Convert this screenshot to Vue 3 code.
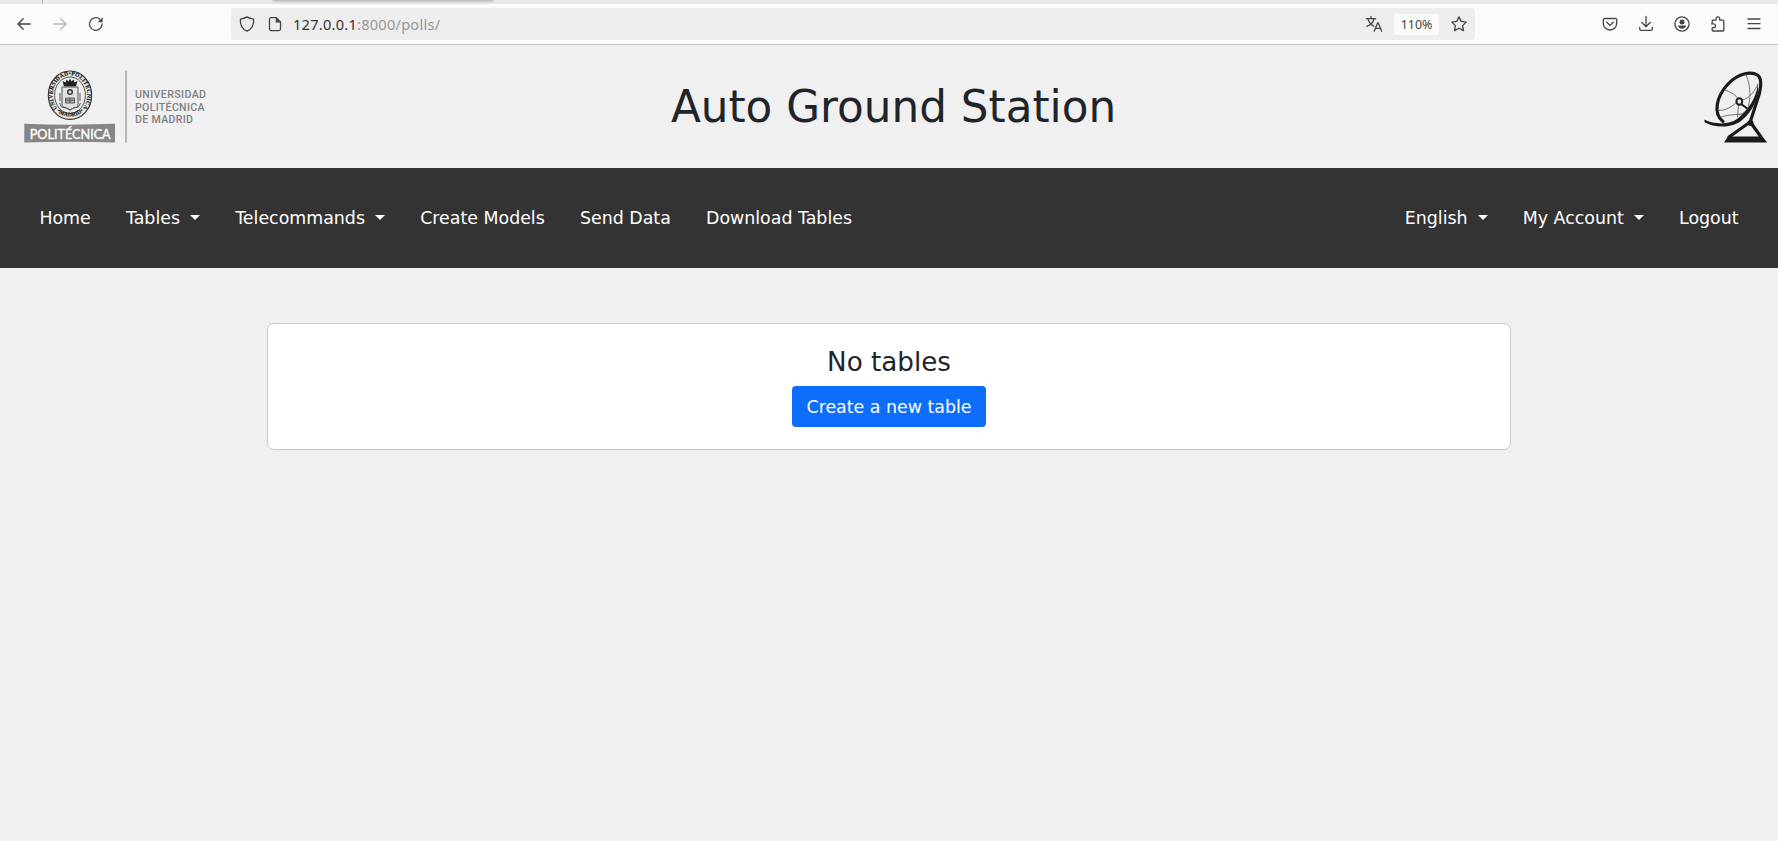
<script setup>
const leftLinks = [
  { label: 'Home' },
  { label: 'Tables', menu: true },
  { label: 'Telecommands', menu: true },
  { label: 'Create Models' },
  { label: 'Send Data' },
  { label: 'Download Tables' },
]
const rightLinks = [
  { label: 'English', menu: true },
  { label: 'My Account', menu: true },
  { label: 'Logout' },
]
</script>

<template>
  <div class="window">
    <div class="tabstrip"><i class="tab-sep"></i><i class="tab-shadow"></i></div>
    <div class="toolbar">
      <div class="nav-buttons">
        <svg class="ic" viewBox="0 0 16 16"><path d="M14.3 8H2M7.2 2.8L2 8l5.2 5.2" /></svg>
        <svg class="ic dim" viewBox="0 0 16 16"><path d="M1.7 8H14M8.8 2.8L14 8l-5.2 5.2" /></svg>
        <svg class="ic" viewBox="0 0 16 16"><path d="M14.1 7.8A6.3 6.3 0 1 1 11.9 3.2" /><path class="solid" d="M14.6 1.2v5H9.6z" /></svg>
      </div>
      <div class="urlbar">
        <svg class="ic shield" viewBox="0 0 16 16"><path d="M8 .9C6.100 2.200 3.800 2.800 1.400 3.100c-.5 5 1.700 9.800 6.600 12.100 4.900-2.300 7.100-7.100 6.600-12.100C12.200 2.800 9.900 2.200 8 .9z" /></svg>
        <svg class="ic page" viewBox="0 0 16 16"><path d="M9.300 1.700H4a1.500 1.500 0 0 0-1.500 1.500v9.900A1.500 1.500 0 0 0 4 14.600h8a1.500 1.500 0 0 0 1.500-1.500V5.900z" /><path class="solid" d="M8.700 1.200l5.300 5.300H8.700z" /></svg>
        <span class="url"><b>127.0.0.1</b>:8000/polls/</span>
        <svg class="ic translate" viewBox="0 0 16 16"><path d="M.3 2.700h9.400M5 .4v2.300M2 2.900c.7 3.400 3.200 5.800 5.800 7.200M8 2.900C7.300 6.400 4.300 9 .8 10.300M8.200 15.200l3.500-8.400h.5l3.500 8.400M9.600 12.300h4.800" /></svg>
        <span class="zoom">110%</span>
        <svg class="ic star" viewBox="0 0 16 16"><path d="M8 .9l2.200 4.500 5 .7-3.600 3.500.9 5-4.500-2.400-4.500 2.400.9-5L.8 6.100l5-.7z" /></svg>
      </div>
      <div class="actions">
        <svg class="ic" viewBox="0 0 16 16"><path d="M2.500 2.500h11a1.200 1.200 0 0 1 1.200 1.200v3.600a6.700 6.700 0 0 1-13.400 0V3.700a1.200 1.200 0 0 1 1.200-1.200z" /><path d="M4.700 6.300L8 9.400l3.300-3.100" /></svg>
        <svg class="ic" viewBox="0 0 16 16"><path d="M8 .5v10M3.800 6.500L8 10.700l4.200-4.200M1.700 11.500v1.600a1.300 1.300 0 0 0 1.300 1.300h10a1.300 1.300 0 0 0 1.300-1.300v-1.600" /></svg>
        <svg class="ic" viewBox="0 0 16 16"><circle cx="8" cy="8" r="7.100" /><circle class="solid" cx="8" cy="5.900" r="2.500" /><path class="solid" d="M3.800 9.600h8.400c-.3 2-2 3.200-4.200 3.200S4.100 11.600 3.800 9.600z" /></svg>
        <svg class="ic" viewBox="0 0 16 16"><path d="M2.200 6.600V4.900a.8.8 0 0 1 .8-.8h3.100V2.700a1.800 1.800 0 0 1 3.600 0v1.400h3.200a.9.9 0 0 1 .9.900v9.100a.9.9 0 0 1-.9.900H3a.8.800 0 0 1-.8-.8v-2.600h1.400a1.900 1.900 0 0 0 0-3.800H1.400" /></svg>
        <svg class="ic" viewBox="0 0 16 16"><path d="M2 3h12M2 7.700h12M2 12.500h12" /></svg>
      </div>
    </div>

    <header class="banner">
      <div class="side">
        <svg class="upm" viewBox="0 0 200 80" width="200" height="80">
          <defs>
            <path id="ring-top" d="M40 41.200A17.300 19.700 0 1 1 64 41.200" />
            <path id="ring-bottom" d="M36 40A20.700 23.300 0 0 0 68 40" />
          </defs>
          <ellipse cx="52" cy="27.200" rx="21.700" ry="24.200" fill="#e8e8e8" stroke="#333" stroke-width="1.100" />
          <ellipse cx="52" cy="27.200" rx="15.400" ry="18.200" fill="#ededed" stroke="#444" stroke-width=".9" />
          <text class="ring"><textPath href="#ring-top" textLength="86" startOffset="1">UNIVERSIDAD•POLITECNICA</textPath></text>
          <text class="ring"><textPath href="#ring-bottom" textLength="29" startOffset="4.500">•MADRID•</textPath></text>
          <path d="M46 18.500l-1.500-5.500 3 1.500 1-3 2 2 1.500-3 1.500 3 2-2 1 3 3-1.500-1.500 5.500z" fill="#222" />
          <path d="M44 19h16v18c0 3-5 2-8 5-3-3-8-2-8-5z" fill="#e2e2e2" stroke="#555" stroke-width="1" />
          <circle cx="52" cy="24" r="2.300" fill="none" stroke="#333" stroke-width="1.500" />
          <path d="M47.500 30h9v5h-9zM47.500 32.200h9M52 30v5" fill="#aaa" stroke="#444" stroke-width=".8" />
          <path d="M41.500 35l2 4 5 1.200 3.500 2 3.500-2 5-1.200 2-4M42 25v8M62 25v8" fill="none" stroke="#555" stroke-width="1" />
          <path d="M6.300 55.700Q50 57.500 97 55.800V74.500Q50 72.800 6.300 74.500z" fill="#868686" />
          <text class="poli" x="11.700" y="70.600" textLength="81" lengthAdjust="spacingAndGlyphs">POLITÉCNICA</text>
          <path d="M108 2.500v72" stroke="#999" stroke-width="1.300" />
          <text class="uni" x="117" y="30.300" textLength="71">UNIVERSIDAD</text>
          <text class="uni" x="117" y="42.700" textLength="69.500">POLITÉCNICA</text>
          <text class="uni" x="117" y="55.200" textLength="58">DE MADRID</text>
        </svg>
      </div>
      <h1>Auto Ground Station</h1>
      <div class="side end">
        <svg class="dish" viewBox="0 0 66 76" width="66" height="76">
          <g fill="none" stroke="#1b1b1b" stroke-linecap="round">
            <path d="M20 51.500C10 44 13 27 25 14 35 3.500 48 1 54.500 5 60 9 57.500 22 54 31L47.500 51" stroke-width="3.200" />
            <path d="M43 5c4 8 5 20 2.500 31-2 5-4.500 7-9.500 9M22 20c6 2 11 5 13.500 9M16 40.500c7 0 13-4 18-8.500M39 30c7-1 13-9 16-16M18 47c8-3 18-2 27-4M35.500 35l-1 12" stroke="#777" stroke-width="1" />
            <ellipse cx="36.300" cy="31.500" rx="2.900" ry="3.300" stroke-width="2" />
            <path d="M38.800 34.500l4.700 3.500" stroke-width="2.100" />
            <path d="M47.200 52L26 67M48 53l10 14" stroke-width="3.200" />
          </g>
          <path d="M1.500 49.500C11 54.500 26 55 34 49 44 41.500 53 29 55 14 56.500 27 50 41.500 38 51 27 59 11 57.500 1.500 52.300z" fill="#1b1b1b" />
          <path d="M25 66.500h34.500l4.700 6H21z" fill="#1b1b1b" />
          <circle cx="47.500" cy="53" r="3" fill="#1b1b1b" />
        </svg>
      </div>
    </header>

    <nav class="menu">
      <div class="links">
        <a v-for="l in leftLinks" :key="l.label">{{ l.label }}<template v-if="l.menu">&nbsp;<i class="caret"></i></template></a>
      </div>
      <div class="links">
        <a v-for="l in rightLinks" :key="l.label">{{ l.label }}<template v-if="l.menu">&nbsp;<i class="caret"></i></template></a>
      </div>
    </nav>

    <main class="card">
      <h2>No tables</h2>
      <button>Create a new table</button>
    </main>
  </div>
</template>

<style>
body { background: #f0f0f0; }
</style>

<style scoped>
.window { height: 841px; overflow: hidden; background: #f0f0f0; color: #212529; font-family: "DejaVu Sans", sans-serif; font-size: 17.4px; }
.tabstrip { height: 4px; background: #eaeaea; display: flex; overflow: hidden; }
.tab-sep { width: 1px; height: 4px; margin-left: 42px; background: #b5b5b5; }
.tab-shadow { width: 218px; height: 0; margin-left: 231px; box-shadow: 0 0 3px 1px #999; }
.toolbar { height: 40px; background: #fbfbfb; border-bottom: 1px solid #c6c6c6; display: flex; align-items: center; box-sizing: content-box; }
.ic { width: 16px; height: 16px; flex: none; fill: none; stroke: #454545; stroke-width: 1.3; stroke-linecap: round; stroke-linejoin: round; overflow: visible; }
.ic.dim { stroke: #b5b5b5; }
.ic .solid { fill: #454545; stroke: none; }
.nav-buttons { width: 215px; padding-left: 16px; display: flex; gap: 20px; }
.urlbar { width: 1244px; height: 32px; background: #ededed; border-radius: 4px; display: flex; align-items: center; }
.shield { margin-left: 8px; }
.page { margin-left: 12px; }
.url { margin-left: 10px; flex: 1; font: 14.6px "Noto Sans", sans-serif; letter-spacing: .24px; color: #979797; line-height: 32px; }
.url b { font-weight: 400; color: #333; }
.zoom { width: 45px; height: 21px; margin: 0 12px 0 12px; border-radius: 3px; background: #fbfbfb; color: #444; text-align: center; font: 12.4px/21px "Noto Sans", sans-serif; }
.star { margin-right: 8px; }
.actions { margin-left: 127px; display: flex; gap: 20px; }
.banner { height: 123px; padding: 0 9px 0 18px; display: flex; align-items: center; }
.side { flex: 1; display: flex; }
.end { justify-content: flex-end; }
.upm { margin-top: 3px; }
.ring { font: 700 5.700px "Liberation Serif", serif; fill: #111; stroke: #111; stroke-width: .15px; }
.poli { font: 400 14.200px Lato, sans-serif; fill: #fff; stroke: #fff; stroke-width: .4px; }
.uni { font: 500 10.600px Roboto, sans-serif; fill: #808080; }
h1 { margin: 0; font-size: 43.7px; font-weight: 400; line-height: 53px; }
.dish { margin-top: 2px; }
.menu { height: 100px; padding: 0 21.800px; background: #333; display: flex; justify-content: space-between; align-items: center; }
.links { display: flex; }
.links a { padding: 0 17.6px; line-height: 26px; color: #fff; white-space: nowrap; }
.caret { display: inline-block; margin-left: 4.5px; vertical-align: 4.5px; border: 5.280px solid transparent; border-top-color: #fff; border-bottom: 0; }
.card { box-sizing: border-box; width: 1244px; height: 127px; margin: 55px auto 0; background: #fff; border: 1px solid #c9c9c9; border-radius: 7px; display: flex; flex-direction: column; align-items: center; padding-top: 22px; }
h2 { margin: 0 0 8px; font-size: 26.2px; font-weight: 400; line-height: 32px; }
button { height: 41px; width: 194px; padding: 1px 0 0; border: 0; border-radius: 4px; background: #0d6efd; color: #fff; font: 17.4px "DejaVu Sans", sans-serif; }
</style>
